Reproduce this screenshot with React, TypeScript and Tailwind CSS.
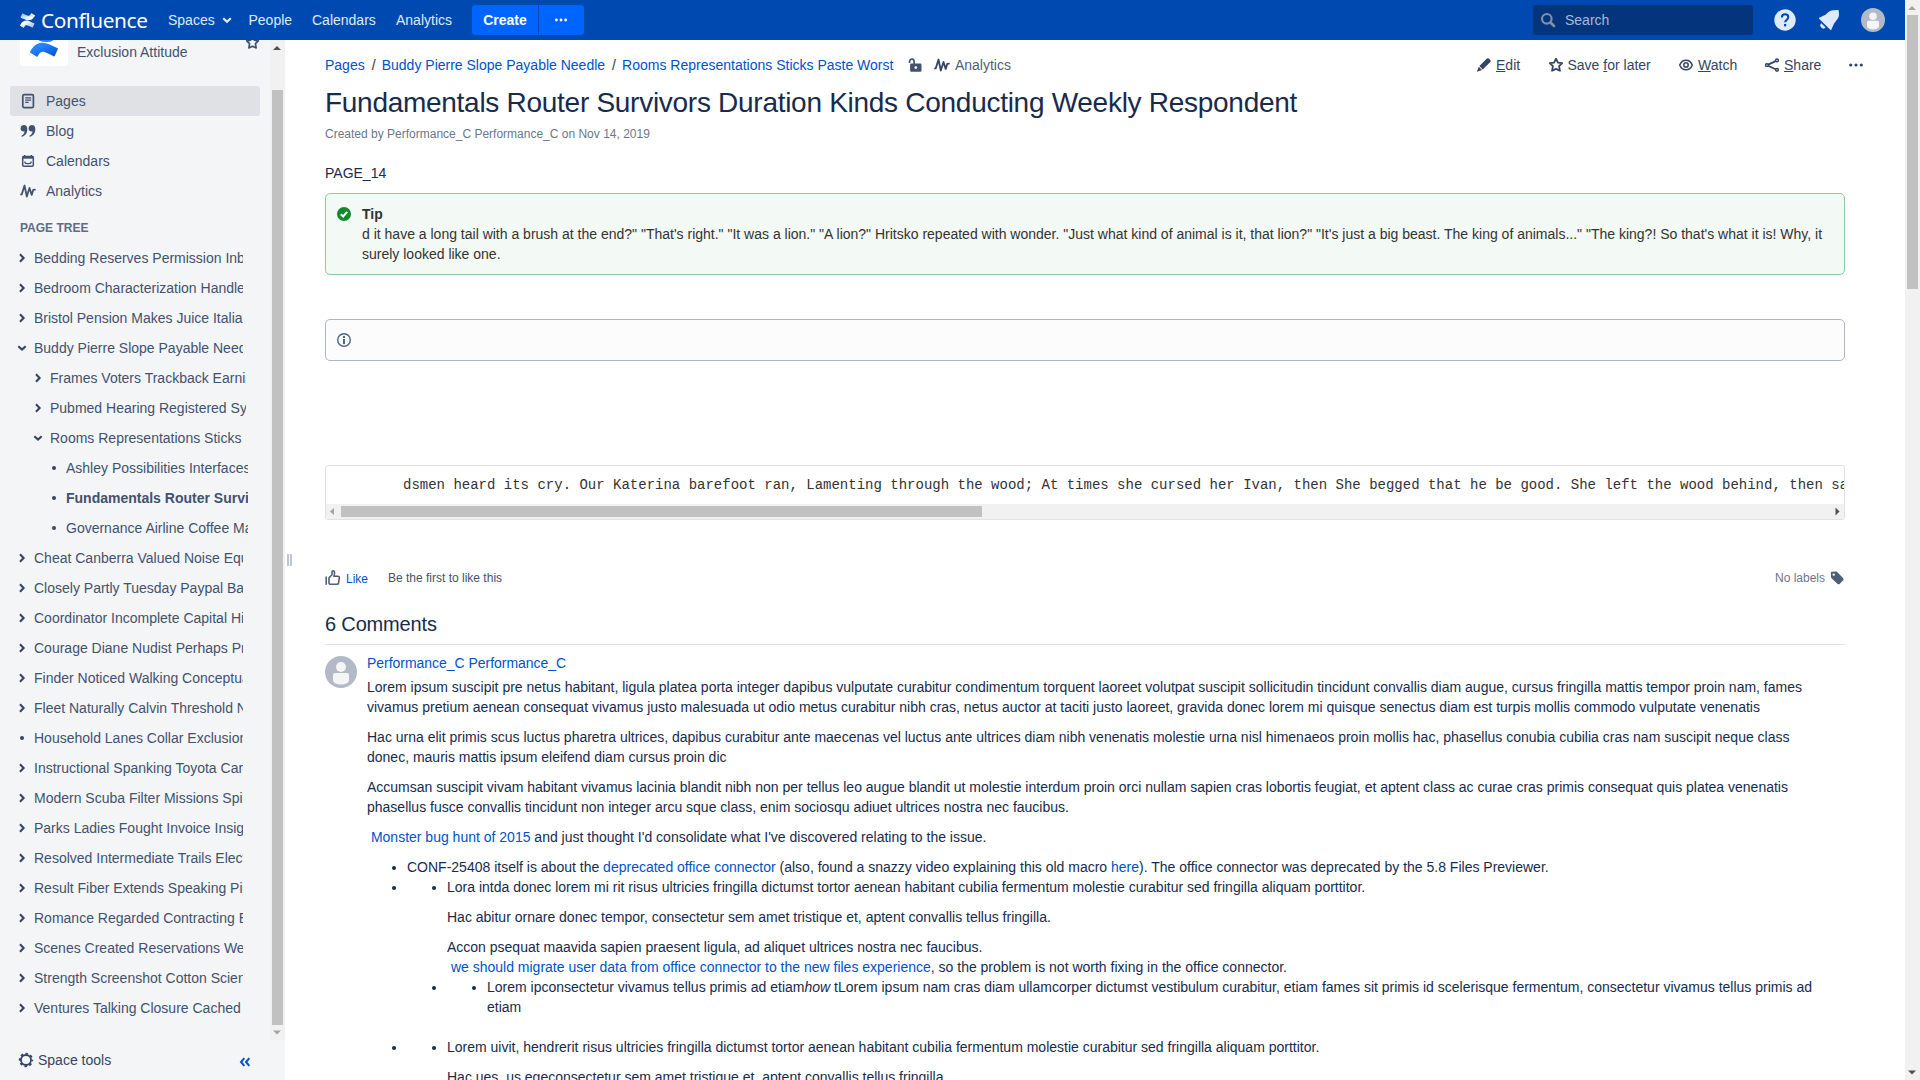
import type { ReactNode } from 'react';

const MARK_LOWER =
  'M.87 18.257c-.248.382-.53.875-.763 1.245a.764.764 0 0 0 .255 1.04l4.965 3.054a.764.764 0 0 0 1.058-.26c.199-.332.454-.763.733-1.221 1.967-3.247 3.945-2.853 7.508-1.146l4.957 2.337a.764.764 0 0 0 1.028-.382l2.364-5.346a.764.764 0 0 0-.382-1 599.851 599.851 0 0 1-4.965-2.361C10.911 10.97 5.224 11.185.87 18.257z';
const MARK_UPPER =
  'M23.131 5.743c.249-.405.531-.875.764-1.25a.764.764 0 0 0-.256-1.034L18.675.404a.764.764 0 0 0-1.058.26c-.195.335-.451.763-.734 1.225-1.966 3.246-3.945 2.85-7.508 1.146L4.437.694a.764.764 0 0 0-1.027.382L1.046 6.422a.764.764 0 0 0 .382 1c1.039.49 3.105 1.467 4.965 2.361 6.698 3.246 12.392 3.029 16.738-4.04z';

function Mark({ id, from, to, className }: { id: string; from: string; to: string; className: string }) {
  return (
    <svg viewBox="0 0 24 24" className={className}>
      <defs>
        <linearGradient id={id + 'a'} x1="1" y1="1" x2="0.2" y2="0.2">
          <stop offset="0" stopColor={from} />
          <stop offset="0.9" stopColor={to} />
        </linearGradient>
        <linearGradient id={id + 'b'} x1="0" y1="0" x2="0.8" y2="0.8">
          <stop offset="0" stopColor={from} />
          <stop offset="0.9" stopColor={to} />
        </linearGradient>
      </defs>
      <path d={MARK_LOWER} fill={`url(#${id}a)`} />
      <path d={MARK_UPPER} fill={`url(#${id}b)`} />
    </svg>
  );
}

function Dots({ className }: { className: string }) {
  return (
    <svg viewBox="0 0 16 16" className={className} fill="currentColor">
      <circle cx="2.7" cy="8" r="1.6" />
      <circle cx="8" cy="8" r="1.6" />
      <circle cx="13.3" cy="8" r="1.6" />
    </svg>
  );
}

function Star({ className }: { className: string }) {
  return (
    <svg viewBox="0 0 16 16" className={className} fill="none" stroke="currentColor" strokeWidth="1.8" strokeLinejoin="round">
      <path d="M8 1.7l1.9 3.9 4.3.6-3.1 3 .8 4.6L8 11.9l-3.9 1.9.8-4.6-3.1-3 4.3-.6z" />
    </svg>
  );
}

function Wave({ className }: { className: string }) {
  return (
    <svg viewBox="0 0 16 16" className={className} fill="none" stroke="currentColor" strokeWidth="1.8" strokeLinecap="round" strokeLinejoin="round">
      <path d="M1 11.400h.7L4.500 2.500l2.300 11 2.700-8.600 2.200 7 1.500-5 1.700-.3" />
    </svg>
  );
}

function Avatar({ className }: { className: string }) {
  return (
    <svg viewBox="0 0 32 32" className={className}>
      <circle cx="16" cy="16" r="16" fill="#b3bac5" />
      <circle cx="16" cy="11" r="5" fill="#f4f5f7" />
      <path d="M8 19q0-2 2-2h12q2 0 2 2v5c0 3-4 4.5-8 4.5S8 27 8 24z" fill="#f4f5f7" />
    </svg>
  );
}

type Kind = 'closed' | 'open' | 'leaf';

function TreeIcon({ kind }: { kind: Kind }) {
  return (
    <svg viewBox="0 0 12 12" className="h-3 w-3 shrink-0 text-[#344563]" fill="none" stroke="currentColor" strokeWidth="2.1">
      {kind === 'closed' && <path d="M4 2.3L7.6 6 4 9.7" />}
      {kind === 'open' && <path d="M2.3 4.2L6 7.6l3.7-3.4" />}
      {kind === 'leaf' && <circle cx="6" cy="6" r="2" fill="currentColor" stroke="none" />}
    </svg>
  );
}

const tree: { label: string; level: 0 | 1 | 2; kind: Kind; bold?: boolean }[] = [
  { label: 'Bedding Reserves Permission Inbox', level: 0, kind: 'closed' },
  { label: 'Bedroom Characterization Handled', level: 0, kind: 'closed' },
  { label: 'Bristol Pension Makes Juice Italian', level: 0, kind: 'closed' },
  { label: 'Buddy Pierre Slope Payable Needle', level: 0, kind: 'open' },
  { label: 'Frames Voters Trackback Earnings', level: 1, kind: 'closed' },
  { label: 'Pubmed Hearing Registered System', level: 1, kind: 'closed' },
  { label: 'Rooms Representations Sticks Paste', level: 1, kind: 'open' },
  { label: 'Ashley Possibilities Interfaces', level: 2, kind: 'leaf' },
  { label: 'Fundamentals Router Survivors', level: 2, kind: 'leaf', bold: true },
  { label: 'Governance Airline Coffee Magic', level: 2, kind: 'leaf' },
  { label: 'Cheat Canberra Valued Noise Equal', level: 0, kind: 'closed' },
  { label: 'Closely Partly Tuesday Paypal Ba', level: 0, kind: 'closed' },
  { label: 'Coordinator Incomplete Capital Hi', level: 0, kind: 'closed' },
  { label: 'Courage Diane Nudist Perhaps Pro', level: 0, kind: 'closed' },
  { label: 'Finder Noticed Walking Conceptual', level: 0, kind: 'closed' },
  { label: 'Fleet Naturally Calvin Threshold Nine', level: 0, kind: 'closed' },
  { label: 'Household Lanes Collar Exclusion', level: 0, kind: 'leaf' },
  { label: 'Instructional Spanking Toyota Care', level: 0, kind: 'closed' },
  { label: 'Modern Scuba Filter Missions Spi', level: 0, kind: 'closed' },
  { label: 'Parks Ladies Fought Invoice Insig', level: 0, kind: 'closed' },
  { label: 'Resolved Intermediate Trails Elect', level: 0, kind: 'closed' },
  { label: 'Result Fiber Extends Speaking Pi', level: 0, kind: 'closed' },
  { label: 'Romance Regarded Contracting Ever', level: 0, kind: 'closed' },
  { label: 'Scenes Created Reservations We', level: 0, kind: 'closed' },
  { label: 'Strength Screenshot Cotton Scient', level: 0, kind: 'closed' },
  { label: 'Ventures Talking Closure Cached', level: 0, kind: 'closed' },
];

const rowPad = ['pl-4', 'pl-8', 'pl-12'];
const rowWidth = ['w-[209px]', 'w-[195.5px]', 'w-[182px]'];

function NavRow({ icon, label, active }: { icon: ReactNode; label: string; active?: boolean }) {
  return (
    <div className={'mx-[10px] flex h-[30px] w-[250px] items-center rounded-[3px] pl-[10px] ' + (active ? 'bg-[#dfe1e5]' : '')}>
      <span className="flex w-[26px] shrink-0">{icon}</span>
      <span>{label}</span>
    </div>
  );
}

function Sidebar() {
  return (
    <aside className="flex w-[285px] shrink-0 flex-col bg-[#f4f5f7] text-[#42526e]">
      <div className="flex h-[1000px] overflow-hidden">
        <div className="w-[270px] shrink-0">
          <div className="-mt-[22px] flex h-12 w-[270px] pl-5">
            <div className="flex h-12 w-12 items-center justify-center rounded-[3px] bg-white">
              <Mark id="space" from="#0052cc" to="#2684ff" className="h-[29px] w-[29px]" />
            </div>
            <span className="ml-[9px] w-[168px] pt-6">Exclusion Attitude</span>
            <Star className="mt-[17px] h-[15px] w-[15px]" />
          </div>
          <nav className="mt-5">
            <NavRow
              active
              label="Pages"
              icon={
                <svg viewBox="0 0 16 16" className="h-4 w-4" fill="none" stroke="currentColor" strokeWidth="1.7">
                  <rect x="2.8" y="1.6" width="10.6" height="13" rx="1.4" />
                  <path d="M5.2 4.8h6M5.2 7.1h6M5.2 9.4h3.4" strokeWidth="1.2" />
                </svg>
              }
            />
            <NavRow
              label="Blog"
              icon={
                <svg viewBox="0 0 16 16" className="h-4 w-4" fill="currentColor">
                  <path d="M4 2.1c2 0 3.3 1.5 3.3 4.1 0 3.8-2.1 6.9-5.6 7.5l-.3-.9C3.2 11.8 4.4 10.3 4.5 8.3c-2.2.5-3.9-.9-3.9-2.9C.6 3.5 2.1 2.1 4 2.1z" />
                  <path d="M12 2.1c2 0 3.3 1.5 3.3 4.1 0 3.8-2.1 6.9-5.6 7.5l-.3-.9c1.8-1 3-2.5 3.1-4.5-2.2.5-3.9-.9-3.9-2.9 0-1.9 1.5-3.3 3.4-3.3z" />
                </svg>
              }
            />
            <NavRow
              label="Calendars"
              icon={
                <svg viewBox="0 0 16 16" className="h-4 w-4" fill="none" stroke="currentColor">
                  <rect x="2.7" y="3.5" width="10.6" height="9.7" rx="1" strokeWidth="1.5" />
                  <path d="M2.5 4.5h11" strokeWidth="2.4" />
                  <path d="M4.6 2v2M11.4 2v2" strokeWidth="1.6" />
                  <path d="M4.8 8.6q0 2 2 2h2.4q2 0 2-2" strokeWidth="1.3" />
                </svg>
              }
            />
            <NavRow label="Analytics" icon={<Wave className="h-4 w-4" />} />
          </nav>
          <div className="mt-[14px] h-[16px] pl-5 text-[12px] leading-4 font-bold text-[#5e6c84]">PAGE TREE</div>
          <div className="mt-[7px]">
            {tree.map((row) => (
              <div key={row.label} className={'flex h-[30px] items-center ' + rowPad[row.level]}>
                <TreeIcon kind={row.kind} />
                <span className={'ml-[6px] overflow-hidden whitespace-nowrap ' + rowWidth[row.level] + (row.bold ? ' font-bold' : '')}>
                  {row.label}
                </span>
              </div>
            ))}
          </div>
        </div>
        <div className="flex w-[15px] flex-col items-center bg-[#f1f1f1]">
          <svg viewBox="0 0 15 15" className="h-[15px] w-[15px] shrink-0" fill="#505050">
            <path d="M7 6l4 4H3z" />
          </svg>
          <div className="mt-[35px] h-[935px] w-[11px] bg-[#c1c1c1]" />
          <svg viewBox="0 0 15 15" className="h-[15px] w-[15px] shrink-0" fill="#a3a3a3">
            <path d="M7 9.5l4-4H3z" />
          </svg>
        </div>
      </div>
      <div className="flex h-10 items-center pl-[18px] text-[#344563]">
        <svg viewBox="0 0 16 16" className="h-4 w-4" fill="none" stroke="currentColor">
          <circle cx="8" cy="8" r="5" strokeWidth="1.8" />
          <circle cx="8" cy="8" r="6.3" strokeWidth="1.8" strokeDasharray="2.6 2.348" strokeDashoffset="1.3" />
        </svg>
        <span className="ml-1 w-[201px]">Space tools</span>
        <svg viewBox="0 0 12 12" className="mt-[3px] h-3 w-3 text-[#0052cc]" fill="none" stroke="currentColor" strokeWidth="2">
          <path d="M5.3 2.2L2 6l3.3 3.8M10.3 2.2L7 6l3.3 3.8" />
        </svg>
      </div>
    </aside>
  );
}

function Header() {
  return (
    <header className="flex h-10 w-[1905px] items-center bg-[#0049b0] text-[#deebff]">
      <div className="flex w-[168px] items-center pl-5">
        <Mark id="brand" from="#8fb2e3" to="#ffffff" className="h-[15px] w-[15px]" />
        <span className="ml-[6px] font-['Noto_Sans'] text-[20.8px] leading-10 tracking-[-0.37px] text-white">Confluence</span>
      </div>
      <span className="w-[52px]">Spaces</span>
      <svg viewBox="0 0 12 12" className="mr-[15.500px] ml-[1px] h-3 w-3" fill="none" stroke="currentColor" strokeWidth="2.2">
        <path d="M2.2 4.2L6 7.8l3.8-3.600" />
      </svg>
      <span className="w-[63.500px]">People</span>
      <span className="w-[84px]">Calendars</span>
      <span className="w-[76px]">Analytics</span>
      <div className="flex h-[30px] w-[66px] items-center justify-center rounded-l-[3px] bg-[#0065ff] font-bold text-white">Create</div>
      <div className="ml-px flex h-[30px] w-[45px] items-center rounded-r-[3px] bg-[#0065ff] pl-[15px] text-white">
        <Dots className="h-[14px] w-[14px]" />
      </div>
      <div className="ml-auto flex h-[30px] w-[220px] items-center rounded-[3px] bg-[#04347c] pl-[7px] text-[#a5bad9]">
        <svg viewBox="0 0 16 16" className="h-4 w-4 text-[#7e8fab]" fill="none" stroke="currentColor">
          <circle cx="6.8" cy="6.8" r="4.8" strokeWidth="2.200" />
          <path d="M10.500 10.500l3.500 3.500" strokeWidth="2.600" strokeLinecap="round" />
        </svg>
        <span className="ml-[9px]">Search</span>
      </div>
      <svg viewBox="0 0 24 24" className="ml-5 h-6 w-6">
        <circle cx="12" cy="12" r="10.7" fill="#deebff" />
        <path d="M8.9 9.4c0-2 1.3-3.1 3.2-3.1s3.2 1.1 3.2 2.800c0 1.300-.7 2-1.600 2.700-1 .7-1.500 1.100-1.500 2.500" fill="none" stroke="#0049b0" strokeWidth="2.1" />
        <rect x="11" y="16" width="2.2" height="2.3" fill="#0049b0" />
      </svg>
      <svg viewBox="0 0 24 24" className="ml-5 h-6 w-6" fill="#deebff">
        <path d="M20.5 2.1q1.5-.3 1.3 1.3-.1 1 .2 2.6c.2 3.8-2.5 6.4-4.8 9.2l-2.8 6.2q-.5 1-1.4.1L2.3 11q-.8-.9.3-1.4l6-2.8c2.2-2.6 4.6-4.6 8.3-4.600z" />
        <path d="M4.3 15.3l4.3 4.3a3 3 0 0 1-4.3-4.3z" />
      </svg>
      <Avatar className="mr-5 ml-5 h-6 w-6" />
    </header>
  );
}

function A({ children }: { children: ReactNode }) {
  return <span className="text-[#0052cc]">{children}</span>;
}

function Toolbar() {
  return (
    <div className="flex h-5 items-center">
      <div className="flex items-center whitespace-pre text-[#333]">
        <A>Pages</A>
        <span className="w-[17px] pl-[7px]">/</span>
        <A>Buddy Pierre Slope Payable Needle</A>
        <span className="w-[17px] pl-[7px]">/</span>
        <A>Rooms Representations Sticks Paste Worst</A>
      </div>
      <svg viewBox="0 0 16 16" className="ml-[13.500px] h-4 w-4 text-[#42526e]">
        <path d="M2.6 6V4.3a2.3 2.3 0 0 1 4.500-.6V7" fill="none" stroke="currentColor" strokeWidth="1.7" />
        <path fillRule="evenodd" d="M4.3 6.500h9q1.200 0 1.200 1.200v5.800q0 1.200-1.200 1.200h-9q-1.200 0-1.200-1.200V7.700q0-1.200 1.200-1.200zM8.800 9.200a1.400 1.400 0 1 0 0 2.800 1.400 1.400 0 0 0 0-2.800z" fill="currentColor" />
      </svg>
      <Wave className="ml-[11px] h-4 w-4 text-[#344563]" />
      <span className="ml-[5px] text-[#505f79]">Analytics</span>
      <div className="-mr-[19px] ml-auto flex items-center text-[#344563]">
        <svg viewBox="0 0 16 16" className="h-4 w-4" fill="currentColor">
          <path d="M10.9 1.6q1-.9 2 0l1.400 1.300q.9 1 0 2L6.700 12.400 3.400 9zM2.700 9.800l3.300 3.300-4.100 1.500q-.9.2-.7-.7z" />
        </svg>
        <span className="ml-1 w-[52px]"><u>E</u>dit</span>
        <Star className="h-4 w-4" />
        <span className="ml-[3.500px] w-[110.500px]">Save <u>f</u>or later</span>
        <svg viewBox="0 0 16 16" className="h-4 w-4" fill="none" stroke="currentColor" strokeWidth="1.5">
          <path d="M1.700 8C3 4.700 5.300 3.200 8 3.200S13 4.700 14.300 8C13 11.300 10.700 12.800 8 12.800S3 11.300 1.700 8z" />
          <circle cx="8" cy="8" r="2.200" />
        </svg>
        <span className="ml-1 w-[66px]"><u>W</u>atch</span>
        <svg viewBox="0 0 16 16" className="h-4 w-4" fill="none" stroke="currentColor" strokeWidth="1.5">
          <circle cx="2.900" cy="8.200" r="1.400" />
          <circle cx="13" cy="3.400" r="1.400" />
          <circle cx="13" cy="12.800" r="1.400" />
          <path d="M4.200 7.600l7.400-3.500M4.200 8.800l7.400 3.400" strokeWidth="1.800" />
        </svg>
        <span className="ml-1 w-[64px]"><u>S</u>hare</span>
        <Dots className="h-4 w-4" />
      </div>
    </div>
  );
}

function Item({ children }: { children: ReactNode }) {
  return (
    <div className="flex">
      <span className="-ml-[15px] flex h-5 w-[15px] shrink-0 items-center pt-[2px]">
        <i className="block h-1 w-1 rounded-full bg-[#172b4d]" />
      </span>
      <div>{children}</div>
    </div>
  );
}

function Comment() {
  return (
    <div className="mt-[11px] flex">
      <Avatar className="h-8 w-8 shrink-0" />
      <div className="-mt-[3px] ml-[10px] w-[1458px] shrink-0">
        <p className="tracking-[-0.03px]"><A>Performance_C Performance_C</A></p>
        <p className="mt-1">
          Lorem ipsum suscipit pre netus habitant, ligula platea porta integer dapibus vulputate curabitur condimentum torquent laoreet volutpat suscipit sollicitudin tincidunt convallis diam augue, cursus fringilla mattis tempor proin nam, fames vivamus pretium aenean consequat vivamus justo malesuada ut odio metus curabitur nibh cras, netus auctor at taciti justo laoreet, gravida donec lorem mi quisque senectus diam est turpis mollis commodo vulputate venenatis
        </p>
        <p className="mt-[10px]">
          Hac urna elit primis scus luctus pharetra ultrices, dapibus curabitur ante maecenas vel luctus ante ultrices diam nibh venenatis molestie urna nisl himenaeos proin mollis hac, phasellus conubia cubilia cras nam suscipit neque class donec, mauris mattis ipsum eleifend diam cursus proin dic
        </p>
        <p className="mt-[10px]">
          Accumsan suscipit vivam habitant vivamus lacinia blandit nibh non per tellus leo augue blandit ut molestie interdum proin orci nullam sapien cras lobortis feugiat, et aptent class ac curae cras primis consequat quis platea venenatis phasellus fusce convallis tincidunt non integer arcu sque class, enim sociosqu adiuet ultrices nostra nec faucibus.
        </p>
        <p className="mt-[10px]">
          &nbsp;<A>Monster bug hunt of 2015</A> and just thought I'd consolidate what I've discovered relating to the issue.
        </p>
        <div className="mt-[10px] pl-10">
          <Item>
            CONF-25408 itself is about the <A>deprecated office connector</A> (also, found a snazzy video explaining this old macro <A>here</A>). The office connector was deprecated by the 5.8 Files Previewer.
          </Item>
          <Item>
            <div className="pl-10">
              <Item>
                <p>Lora intda donec lorem mi rit risus ultricies fringilla dictumst tortor aenean habitant cubilia fermentum molestie curabitur sed fringilla aliquam porttitor.</p>
                <p className="mt-[10px]">Hac abitur ornare donec tempor, consectetur sem amet tristique et, aptent convallis tellus fringilla.</p>
                <p className="mt-[10px]">Accon psequat maavida sapien praesent ligula, ad aliquet ultrices nostra nec faucibus.</p>
                <p>&nbsp;<A>we should migrate user data from office connector to the new files experience</A>, so the problem is not worth fixing in the office connector.</p>
              </Item>
              <Item>
                <div className="pl-10">
                  <Item>
                    Lorem ipconsectetur vivamus tellus primis ad etiam<em>how</em> tLorem ipsum nam cras diam ullamcorper dictumst vestibulum curabitur, etiam fames sit primis id scelerisque fermentum, consectetur vivamus tellus primis ad etiam
                  </Item>
                </div>
              </Item>
            </div>
          </Item>
          <div className="h-5" />
          <Item>
            <div className="pl-10">
              <Item>
                <p>Lorem uivit, hendrerit risus ultricies fringilla dictumst tortor aenean habitant cubilia fermentum molestie curabitur sed fringilla aliquam porttitor.</p>
                <p className="mt-[10px]">Hac ues, us egeconsectetur sem amet tristique et, aptent convallis tellus fringilla.</p>
              </Item>
            </div>
          </Item>
        </div>
      </div>
    </div>
  );
}

function Page() {
  return (
    <main className="w-[1520px] shrink-0 pt-[15px] text-[#172b4d]">
      <Toolbar />
      <h1 className="mt-[12px] h-8 text-[28px] leading-8 tracking-[-0.28px] whitespace-nowrap">
        Fundamentals Router Survivors Duration Kinds Conducting Weekly Respondent
      </h1>
      <p className="mt-[5px] text-[12px] leading-5 text-[#6b778c]">Created by Performance_C Performance_C on Nov 14, 2019</p>
      <p className="mt-[19px]">PAGE_14</p>
      <section className="mt-[10px] flex h-[82px] rounded-[5px] border border-[#91c89c] bg-[#f3f9f4] pt-[10px] text-[#333]">
        <svg viewBox="0 0 16 16" className="mt-[2px] ml-[10px] h-4 w-4 shrink-0">
          <circle cx="8" cy="8" r="7" fill="#14892c" />
          <path d="M4.800 8.200l2.300 2.300 4.100-4.700" fill="none" stroke="#fff" strokeWidth="2" />
        </svg>
        <div className="ml-[10px] w-[1462px]">
          <p className="font-bold">Tip</p>
          <p>
            d it have a long tail with a brush at the end?" "That's right." "It was a lion." "A lion?" Hritsko repeated with wonder. "Just what kind of animal is it, that lion?" "It's just a big beast. The king of animals..." "The king?! So that's what it is! Why, it surely looked like one.
          </p>
        </div>
      </section>
      <section className="mt-[44px] flex h-[42px] items-center rounded-[5px] border border-[#aab8c6] bg-[#fcfcfc] pl-[10px]">
        <svg viewBox="0 0 16 16" className="h-4 w-4 text-[#4a6785]">
          <circle cx="8" cy="8" r="6.300" fill="none" stroke="currentColor" strokeWidth="1.400" />
          <path d="M7 4h2v2H7zM7 7h2v5H7z" fill="currentColor" />
        </svg>
      </section>
      <section className="mt-[104px] flex h-[55px] flex-col overflow-hidden rounded-[3px] border border-[#dfe1e5] text-[#333]">
        <pre className="h-[38px] shrink-0 overflow-hidden pt-[9px] pl-[77px] font-['Liberation_Mono',monospace] text-[14px] leading-5">
          dsmen heard its cry. Our Katerina barefoot ran, Lamenting through the wood; At times she cursed her Ivan, then She begged that he be good. She left the wood behind, then sat
        </pre>
        <div className="flex h-[15px] shrink-0 items-center bg-[#f1f1f1]">
          <svg viewBox="0 0 15 15" className="h-[15px] w-[15px]" fill="#a3a3a3">
            <path d="M4 7.500L8 4v7z" />
          </svg>
          <div className="h-[11px] w-[641px] bg-[#c1c1c1]" />
          <svg viewBox="0 0 15 15" className="ml-auto h-[15px] w-[15px]" fill="#505050">
            <path d="M10.500 7.500L6.500 3.500v8z" />
          </svg>
        </div>
      </section>
      <div className="mt-[48px] flex h-5 items-center text-[12px]">
        <svg viewBox="0 0 16 16" className="h-4 w-4 text-[#505f79]" fill="none" stroke="currentColor" strokeWidth="1.600" strokeLinejoin="round">
          <path d="M1.200 6.500v8.300M4 13V7.800L7 4.800V2.200q0-1.300 1.200-1.300t1.300 1.200v1.500L9 6.300h3.900q1.500 0 1.400 1.300l-.7 5.200q-.2 1.500-1.700 1.500H6q-2 0-2-1.300z" />
        </svg>
        <span className="mt-[2px] ml-[5px] w-[42px] text-[#0052cc]">Like</span>
        <span className="text-[#42526e]">Be the first to like this</span>
        <span className="ml-auto text-[#6b778c]">No labels</span>
        <svg viewBox="0 0 16 16" className="ml-1 h-4 w-4 text-[#505f79]">
          <path fillRule="evenodd" d="M2.600 1.800L7 1.600q.8 0 1.400.6l5.800 6q.9 1 0 2l-3.600 3.700q-1 .9-2 0L2.500 8.200Q2 7.600 2 6.800l-.2-4q0-1 .8-1zM4.700 3.400a1.200 1.200 0 1 0 0 2.400 1.200 1.200 0 0 0 0-2.400z" fill="currentColor" />
        </svg>
      </div>
      <h2 className="mt-[24px] flex h-[33px] border-b border-[#dfe1e6] text-[20px] leading-6 tracking-[-0.16px]">6 Comments</h2>
      <Comment />
    </main>
  );
}

export default function App() {
  return (
    <div className="flex h-[1080px] w-[1920px] overflow-hidden bg-white font-['Liberation_Sans',Arial,sans-serif] text-[14px] leading-5">
      <div className="flex w-[1905px] flex-col">
        <Header />
        <div className="flex h-[1040px] overflow-hidden">
          <Sidebar />
          <div className="flex w-10 shrink-0 items-start gap-px pt-[514px] pl-[2px]">
            <i className="block h-3 w-[2px] bg-[#c1c7d0]" />
            <i className="block h-3 w-[2px] bg-[#c1c7d0]" />
          </div>
          <Page />
        </div>
      </div>
      <div className="flex w-[15px] flex-col items-center bg-[#f1f1f1]">
        <svg viewBox="0 0 15 15" className="h-[15px] w-[15px] shrink-0" fill="#a3a3a3">
          <path d="M7 6l4 4H3z" />
        </svg>
        <div className="h-[274px] w-[11px] bg-[#c1c1c1]" />
        <svg viewBox="0 0 15 15" className="mt-auto h-[15px] w-[15px] shrink-0" fill="#505050">
          <path d="M7 9.500l4-4H3z" />
        </svg>
      </div>
    </div>
  );
}
